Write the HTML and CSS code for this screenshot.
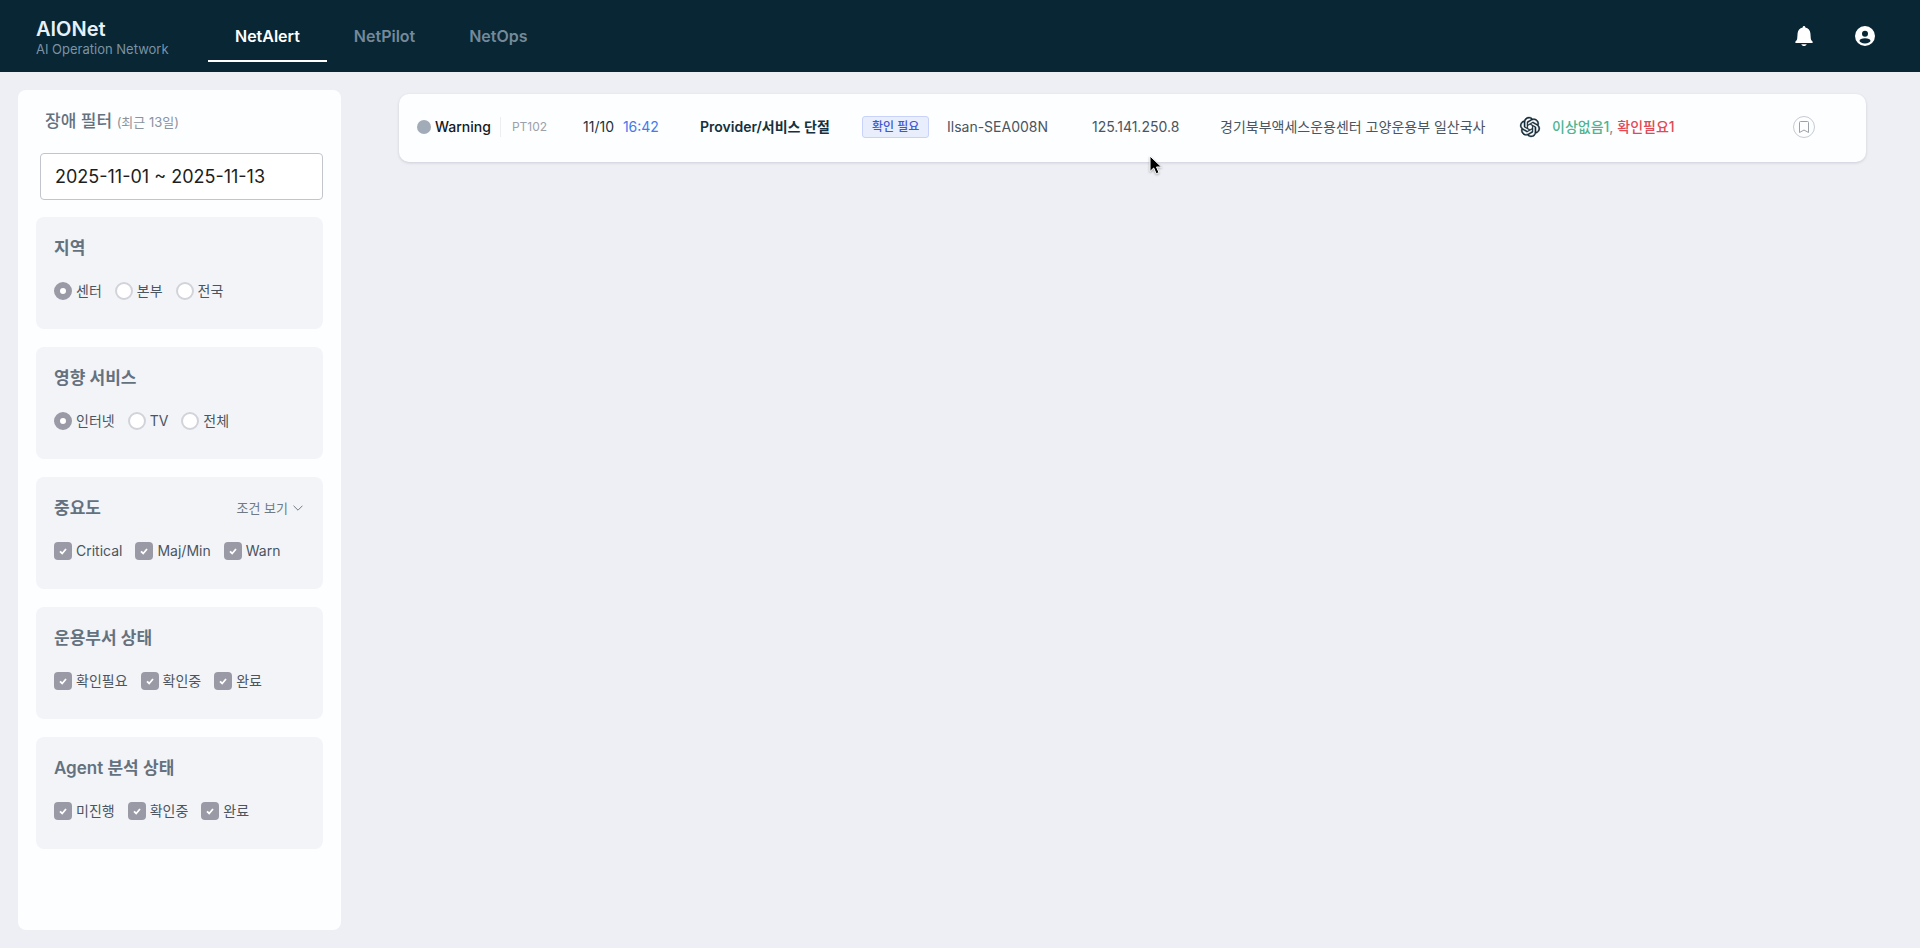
FILE: index.html
```html
<!DOCTYPE html>
<html lang="ko">
	<head>
		<meta charset="UTF-8">
		<title>AIONet</title>
		<link rel="stylesheet" href="styles.css">
	</head>
	<body>
		<header class="header">
			<div class="logo">
				<strong class="logo-name">AIONet</strong>
				<span class="logo-sub">AI Operation Network</span>
			</div>
			<nav class="nav">
				<a class="nav-link active" href="#">NetAlert</a>
				<a class="nav-link" href="#">NetPilot</a>
				<a class="nav-link" href="#">NetOps</a>
			</nav>
			<div class="header-btns">
				<button class="icon-btn" type="button" aria-label="알림">
					<svg width="24" height="24" viewBox="0 0 24 24" fill="currentColor"><path d="M12 2c-.8 0-1.300.6-1.300 1.400C7.600 4 5.900 6.300 5.600 9.300L5.200 14.500c-.1 1.200-.6 1.800-1.300 2.400-.6.500-.7.800-.7 1.300 0 .5.300.8.8.8h16c.5 0 .8-.3.800-.8 0-.5-.1-.8-.7-1.300-.7-.6-1.200-1.200-1.300-2.400l-.4-5.200C18.100 6.300 16.400 4 13.300 3.400 13.300 2.600 12.800 2 12 2zM9.300 20.200h5.400c-.4 1.200-1.400 1.800-2.700 1.800s-2.300-.6-2.700-1.800z"/></svg>
				</button>
				<button class="icon-btn" type="button" aria-label="내 계정">
					<svg width="24" height="24" viewBox="0 0 24 24" fill="currentColor"><path fill-rule="evenodd" d="M12 2a10 10 0 1 0 0 20 10 10 0 0 0 0-20zm0 4.800a3 3 0 1 1 0 6 3 3 0 0 1 0-6zm0 7.500c3.200 0 5.500 1.200 5.500 2.500 0 1.400-2.300 2.600-5.500 2.600s-5.500-1.200-5.500-2.600c0-1.300 2.300-2.500 5.500-2.500z"/></svg>
				</button>
			</div>
		</header>
		<div class="content">
			<aside class="sidebar">
				<h2 class="sidebar-title">장애 필터 <small>(최근 13일)</small></h2>
				<input class="date-input" type="text" value="2025-11-01 ~ 2025-11-13" aria-label="조회 기간">
				<form class="filters">
					<fieldset class="filter">
						<div class="filter-head"><h3>지역</h3></div>
						<div class="options">
							<label><input type="radio" name="area" checked>센터</label>
							<label><input type="radio" name="area">본부</label>
							<label><input type="radio" name="area">전국</label>
						</div>
					</fieldset>
					<fieldset class="filter">
						<div class="filter-head"><h3>영향 서비스</h3></div>
						<div class="options">
							<label><input type="radio" name="service" checked>인터넷</label>
							<label><input type="radio" name="service">TV</label>
							<label><input type="radio" name="service">전체</label>
						</div>
					</fieldset>
					<fieldset class="filter">
						<div class="filter-head">
							<h3>중요도</h3>
							<button class="more-btn" type="button">조건 보기
								<svg width="10" height="10" viewBox="0 0 10 10" fill="none" stroke="currentColor" stroke-linecap="round" stroke-linejoin="round"><path d="M.8 3 5 7.200 9.200 3"/></svg>
							</button>
						</div>
						<div class="options">
							<label><input type="checkbox" checked>Critical</label>
							<label><input type="checkbox" checked>Maj/Min</label>
							<label><input type="checkbox" checked>Warn</label>
						</div>
					</fieldset>
					<fieldset class="filter">
						<div class="filter-head"><h3>운용부서 상태</h3></div>
						<div class="options">
							<label><input type="checkbox" checked>확인필요</label>
							<label><input type="checkbox" checked>확인중</label>
							<label><input type="checkbox" checked>완료</label>
						</div>
					</fieldset>
					<fieldset class="filter">
						<div class="filter-head"><h3>Agent 분석 상태</h3></div>
						<div class="options">
							<label><input type="checkbox" checked>미진행</label>
							<label><input type="checkbox" checked>확인중</label>
							<label><input type="checkbox" checked>완료</label>
						</div>
					</fieldset>
				</form>
			</aside>
			<main class="main">
				<ul class="alert-list">
					<li class="alert">
						<div class="level">
							<span class="dot"></span>
							<span class="level-name">Warning</span>
							<span class="code">PT102</span>
						</div>
						<div class="time">11/10 <span>16:42</span></div>
						<div class="alert-title">Provider/서비스 단절</div>
						<div><span class="badge">확인 필요</span></div>
						<div>Ilsan-SEA008N</div>
						<div>125.141.250.8</div>
						<div>경기북부액세스운용센터 고양운용부 일산국사</div>
						<div class="agent">
							<svg width="20" height="20" viewBox="0 0 24 24" fill="currentColor" stroke="currentColor" stroke-width=".4"><path d="M22.2819 9.8211a5.9847 5.9847 0 0 0-.5157-4.9108 6.0462 6.0462 0 0 0-6.5098-2.9A6.0651 6.0651 0 0 0 4.9807 4.1818a5.9847 5.9847 0 0 0-3.9977 2.9 6.0462 6.0462 0 0 0 .7427 7.0966 5.98 5.98 0 0 0 .511 4.9107 6.051 6.051 0 0 0 6.5146 2.9001A5.9847 5.9847 0 0 0 13.2599 24a6.0557 6.0557 0 0 0 5.7718-4.2058 5.9894 5.9894 0 0 0 3.9977-2.9001 6.0557 6.0557 0 0 0-.7475-7.0729zm-9.022 12.6081a4.4755 4.4755 0 0 1-2.8764-1.0408l.1419-.0804 4.7783-2.7582a.7948.7948 0 0 0 .3927-.6813v-6.7369l2.02 1.1686a.071.071 0 0 1 .038.052v5.5826a4.504 4.504 0 0 1-4.4945 4.4944zm-9.6607-4.1254a4.4708 4.4708 0 0 1-.5346-3.0137l.142.0852 4.783 2.7582a.7712.7712 0 0 0 .7806 0l5.8428-3.3685v2.3324a.0804.0804 0 0 1-.0332.0615L9.74 19.9502a4.4992 4.4992 0 0 1-6.1408-1.6464zM2.3408 7.8956a4.485 4.485 0 0 1 2.3655-1.9728V11.6a.7664.7664 0 0 0 .3879.6765l5.8144 3.3543-2.0201 1.1685a.0757.0757 0 0 1-.071 0l-4.8303-2.7865A4.504 4.504 0 0 1 2.3408 7.872zm16.5963 3.8558L13.1038 8.364 15.1192 7.2a.0757.0757 0 0 1 .071 0l4.8303 2.7913a4.4944 4.4944 0 0 1-.6765 8.1042v-5.6772a.79.79 0 0 0-.407-.667zm2.0107-3.0231l-.142-.0852-4.7735-2.7818a.7759.7759 0 0 0-.7854 0L9.409 9.2297V6.8974a.0662.0662 0 0 1 .0284-.0615l4.8303-2.7866a4.4992 4.4992 0 0 1 6.6802 4.66zM8.3065 12.863l-2.02-1.1638a.0804.0804 0 0 1-.038-.0567V6.0742a4.4992 4.4992 0 0 1 7.3757-3.4537l-.142.0805L8.704 5.459a.7948.7948 0 0 0-.3927.6813zm1.0976-2.3654l2.602-1.4998 2.6069 1.4998v2.9994l-2.5974 1.4997-2.6067-1.4997Z"/></svg>
							<span><b class="ok">이상없음1</b>, <b class="need">확인필요1</b></span>
						</div>
						<button class="bookmark" type="button" aria-label="북마크">
							<svg width="12" height="14" viewBox="0 0 12 14" fill="none" stroke="currentColor" stroke-linejoin="round"><path d="M2.500 1.500h7q1 0 1 1v10L6 10l-4.500 2.500v-10q0-1 1-1z"/></svg>
						</button>
					</li>
				</ul>
			</main>
		</div>
		<svg class="cursor" width="16" height="22" viewBox="0 0 16 22"><path d="M1 1v15.500l3.700-3.500 2.500 5.800 2.800-1.200-2.500-5.600h5z" fill="#000" stroke="#fff"/></svg>
	</body>
</html>
```
FILE: styles.css
```css
*{
	padding: 0;
	margin: 0;
	box-sizing: border-box;
}
body{
	min-height: 100vh;
	display: flex;
	flex-direction: column;
	background-color: #eeeff4;
	color: #4a5560;
	font: 14px/20px Inter, "Noto Sans CJK KR", sans-serif;
}
button, input{
	font: inherit;
}
button{
	border: none;
	background: none;
	cursor: pointer;
}
/*头部*/
.header{
	height: 72px;
	padding: 0 43px 0 36px;
	display: flex;
	align-items: center;
	background-color: #082633;
}
.logo{
	display: flex;
	flex-direction: column;
	width: 172px;
	padding-top: 3px;
}
.logo-name{
	font-size: 20px;
	line-height: 22px;
	font-weight: 600;
	color: #e6f1fc;
}
.logo-sub{
	font-size: 13px;
	line-height: 18px;
	color: #7c93a3;
}
.nav{
	display: flex;
}
.nav-link{
	padding: 14px 27px 12px;
	border-bottom: 2px solid transparent;
	font-size: 16px;
	line-height: 24px;
	font-weight: 600;
	color: #74899a;
	text-decoration: none;
}
.nav-link.active{
	border-color: #fff;
	color: #fff;
}
.header-btns{
	margin-left: auto;
	display: flex;
	gap: 37px;
}
.icon-btn{
	height: 24px;
	color: #fff;
}
.icon-btn svg{
	display: block;
}
.content{
	flex: 1;
	display: flex;
	padding: 18px;
}
/*左侧筛选*/
.sidebar{
	width: 323px;
	flex: none;
	padding: 18px;
	border-radius: 8px;
	background-color: #fdfeff;
}
.sidebar-title{
	margin: 0 9px 19px;
	font-size: 17px;
	line-height: 26px;
	font-weight: 500;
	color: #64727f;
}
.sidebar-title small{
	font-size: 13px;
	line-height: 13px;
	font-weight: 400;
	color: #8a939e;
}
.date-input{
	display: block;
	width: calc(100% - 4px);
	height: 47px;
	margin: 0 0 17px 4px;
	padding: 0 14px;
	border: 1px solid #c3c5cd;
	border-radius: 4px;
	background-color: #fff;
	font-size: 18px;
	color: #1c1e21;
}
.filters{
	display: grid;
	gap: 18px;
}
.filter{
	padding: 18px 18px 29px;
	border: none;
	border-radius: 8px;
	background-color: #f3f4f8;
}
.filter-head{
	display: flex;
	justify-content: space-between;
	align-items: center;
	margin-bottom: 21px;
}
.filter h3{
	font-size: 17px;
	line-height: 26px;
	font-weight: 600;
	color: #64727f;
}
.more-btn{
	display: flex;
	align-items: center;
	gap: 5px;
	padding-right: 2px;
	font-size: 13px;
	color: #6f7a85;
}
.options{
	display: flex;
	gap: 13px;
}
.options label{
	display: flex;
	align-items: center;
	gap: 4px;
	line-height: 18px;
}
.options input{
	appearance: none;
	width: 18px;
	height: 18px;
}
.options input[type=radio]{
	border: 2px solid #d2d3da;
	border-radius: 50%;
	background-color: #fff;
}
.options input[type=radio]:checked{
	border: 6px solid #9a9aa6;
}
.options input[type=checkbox]{
	border-radius: 4px;
	background-color: #fff;
}
.options input[type=checkbox]:checked{
	background: #9a9aa6 url("data:image/svg+xml,%3Csvg xmlns='http://www.w3.org/2000/svg' viewBox='0 0 18 18' fill='none' stroke='white' stroke-width='1.8'%3E%3Cpath d='M6 9.300l2.200 2.200L12 7'/%3E%3C/svg%3E");
}
/*告警列表*/
.main{
	flex: 1;
	padding: 4px 36px 0 58px;
}
.alert-list{
	list-style: none;
}
.alert{
	display: grid;
	grid-template-columns: 166fr 117fr 162fr 85fr 145fr 128fr 300fr 273fr 22px;
	align-items: center;
	height: 68px;
	padding: 0 51px 2px 18px;
	border-radius: 10px;
	background-color: #fdfeff;
	box-shadow: 0 1px 3px rgba(30, 40, 70, .16);
	white-space: nowrap;
}
.level{
	display: flex;
	align-items: center;
}
.dot{
	width: 14px;
	height: 14px;
	margin-right: 4px;
	border-radius: 50%;
	background-color: #a2acb8;
}
.level-name{
	font-weight: 500;
	color: #16191d;
}
.code{
	margin-left: 9px;
	padding-left: 11px;
	border-left: 1px solid #eceef2;
	font-size: 12px;
	color: #9ba1aa;
}
.time{
	color: #1d3040;
}
.time span{
	margin-left: 5px;
	color: #3f7cec;
}
.alert-title{
	font-weight: 600;
	color: #143140;
}
.badge{
	display: inline-block;
	padding: 0 9px;
	border: 1px solid #c9d3fa;
	border-radius: 3px;
	background-color: #e9eefd;
	font-size: 12px;
	font-weight: 500;
	color: #3f57cf;
}
.agent{
	display: flex;
	align-items: center;
	gap: 12px;
	color: #142a37;
}
.agent svg{
	overflow: visible;
}
.agent span{
	color: #7c8790;
}
.agent b{
	font-weight: 500;
}
.agent .ok{
	color: #4fb491;
}
.agent .need{
	color: #e14a55;
}
.bookmark{
	display: flex;
	align-items: center;
	justify-content: center;
	width: 22px;
	height: 22px;
	border: 1px solid #c6cad2;
	border-radius: 50%;
	color: #9ba1aa;
}
.cursor{
	position: absolute;
	left: 1149px;
	top: 155px;
	pointer-events: none;
	filter: drop-shadow(0 1px 1px rgba(0, 0, 0, .3));
}
```
